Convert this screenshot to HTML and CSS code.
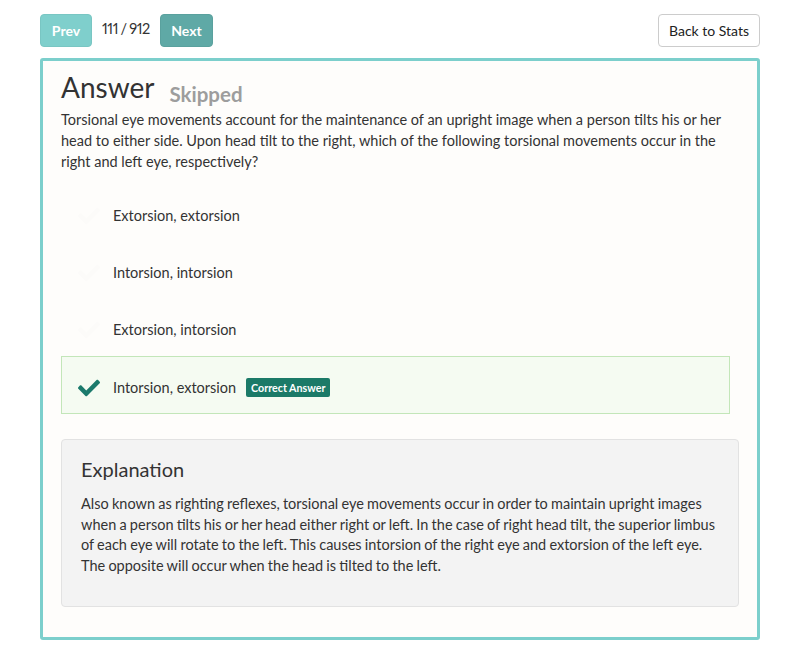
FILE: index.html
```html
<!DOCTYPE html>
<html>
<head>
<meta charset="utf-8">
<link rel="stylesheet" href="styles.css">
</head>
<body>
<div class="page">
  <div class="toolbar">
    <div class="pager">
      <button class="btn btn-prev">Prev</button>
      <span class="count">111 / 912</span>
      <button class="btn btn-next">Next</button>
    </div>
    <button class="btn btn-back">Back to Stats</button>
  </div>
  <div class="card">
    <div class="title-row">
      <h1 class="title">Answer</h1>
      <span class="status">Skipped</span>
    </div>
    <p class="question">Torsional eye movements account for the maintenance of an upright image when a person tilts his or her head to either side. Upon head tilt to the right, which of the following torsional movements occur in the right and left eye, respectively?</p>
    <div class="options">
      <div class="option">
        <svg class="check faint" viewBox="0 0 512 512"><path d="M173.9 439.4L7.5 273c-10-10-10-26.2 0-36.2l36.2-36.2c10-10 26.2-10 36.2 0L192 312.7 432.1 72.6c10-10 26.2-10 36.2 0l36.2 36.2c10 10 10 26.2 0 36.2L210.1 439.4c-10 10-26.2 10-36.2 0z"/></svg>
        <span class="opt-text">Extorsion, extorsion</span>
      </div>
      <div class="option">
        <svg class="check faint" viewBox="0 0 512 512"><path d="M173.9 439.4L7.5 273c-10-10-10-26.2 0-36.2l36.2-36.2c10-10 26.2-10 36.2 0L192 312.7 432.1 72.6c10-10 26.2-10 36.2 0l36.2 36.2c10 10 10 26.2 0 36.2L210.1 439.4c-10 10-26.2 10-36.2 0z"/></svg>
        <span class="opt-text">Intorsion, intorsion</span>
      </div>
      <div class="option">
        <svg class="check faint" viewBox="0 0 512 512"><path d="M173.9 439.4L7.5 273c-10-10-10-26.2 0-36.2l36.2-36.2c10-10 26.2-10 36.2 0L192 312.7 432.1 72.6c10-10 26.2-10 36.2 0l36.2 36.2c10 10 10 26.2 0 36.2L210.1 439.4c-10 10-26.2 10-36.2 0z"/></svg>
        <span class="opt-text">Extorsion, intorsion</span>
      </div>
      <div class="option correct">
        <svg class="check" viewBox="0 0 512 512"><path d="M173.9 439.4L7.5 273c-10-10-10-26.2 0-36.2l36.2-36.2c10-10 26.2-10 36.2 0L192 312.7 432.1 72.6c10-10 26.2-10 36.2 0l36.2 36.2c10 10 10 26.2 0 36.2L210.1 439.4c-10 10-26.2 10-36.2 0z"/></svg>
        <span class="opt-text">Intorsion, extorsion</span>
        <span class="badge">Correct Answer</span>
      </div>
    </div>
    <div class="explanation">
      <h2 class="exp-title">Explanation</h2>
      <p class="exp-text">Also known as righting reflexes, torsional eye movements occur in order to maintain upright images<br>when a person tilts his or her head either right or left. In the case of right head tilt, the superior limbus<br>of each eye will rotate to the left. This causes intorsion of the right eye and extorsion of the left eye.<br>The opposite will occur when the head is tilted to the left.</p>
    </div>
  </div>
</div>
</body>
</html>
```
FILE: styles.css
```css
* { box-sizing: border-box; }
body {
  margin: 0;
  background: #ffffff;
  font-family: Lato, "Open Sans", sans-serif;
  color: #333;
}
.page {
  width: 720px;
  margin-left: 40px;
  padding-top: 14px;
}
.toolbar {
  display: flex;
  justify-content: space-between;
  align-items: center;
}
.pager {
  display: flex;
  align-items: center;
}
.btn {
  font-family: Lato, sans-serif;
  font-size: 14px;
  height: 33px;
  border-radius: 4px;
  padding: 0 12px;
  cursor: pointer;
}
.btn-prev {
  width: 52px;
  background: #7fcfcc;
  border: 1px solid #79c6c3;
  color: #fff;
  font-weight: 700;
  padding: 0;
}
.btn-next {
  width: 53px;
  background: #5fa9a6;
  border: 1px solid #5aa19e;
  color: #fff;
  font-weight: 700;
  padding: 0;
}
.count {
  font-size: 14.5px;
  color: #333;
  width: 48px;
  margin: 0 10px 4px 10px;
  white-space: nowrap;
  letter-spacing: -0.4px;
  word-spacing: -0.8px;
  font-variant-numeric: proportional-nums;
}
.btn-back {
  width: 102px;
  background: #fff;
  border: 1px solid #ccc;
  color: #222;
  padding: 0;
}
.card {
  margin-top: 11px;
  border: 3px solid #7ccfcc;
  border-radius: 3px;
  background: #fefdfb;
  padding: 8px 18px 30px 18px;
}
.title-row {
  display: flex;
  align-items: baseline;
}
.title {
  margin: 0;
  font-size: 28px;
  font-weight: 400;
  color: #333;
  line-height: 36px;
}
.status {
  margin-left: 15px;
  font-size: 20.5px;
  font-weight: 700;
  color: #9d9d9d;
  position: relative;
  top: 4px;
}
.question {
  margin: 4px 0 0 0;
  font-size: 14.5px;
  line-height: 21px;
  color: #333;
}
.options {
  margin-top: 15px;
  width: 669px;
}
.option {
  display: flex;
  align-items: center;
  height: 57px;
  padding-left: 17px;
  font-size: 14.5px;
  color: #333;
}
.check {
  width: 22px;
  height: 22px;
  fill: #1b7a6c;
  margin-right: 13px;
}
.check.faint { fill: #fcfbf9; }
.correct {
  margin-top: -2px;
  height: 58px;
  background: #f5fbf2;
  border: 1px solid #c3e6b9;
  padding-left: 16px;
  padding-top: 5px;
}
.badge {
  margin-left: 10px;
  background: #1b7a68;
  color: #fff;
  font-size: 10.7px;
  font-weight: 700;
  padding: 3px 5px;
  border-radius: 2px;
  line-height: 13px;
}
.explanation {
  margin-top: 25px;
  width: 678px;
  background: #f3f3f3;
  border: 1px solid #e2e2e2;
  border-radius: 4px;
  padding: 16px 8px 29px 19px;
}
.exp-title {
  margin: 0;
  font-size: 20px;
  font-weight: 400;
  color: #333;
  line-height: 26px;
}
.exp-text {
  margin: 12px 0 0 0;
  font-size: 14.5px;
  line-height: 20.7px;
  word-spacing: -0.5px;
  color: #333;
  white-space: nowrap;
}
```
